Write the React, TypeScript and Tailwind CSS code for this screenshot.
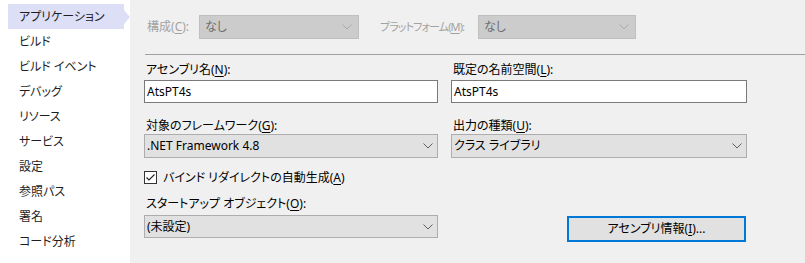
import React from 'react';

const font = "font-['Noto_Sans','Noto_Sans_CJK_JP',sans-serif] [font-feature-settings:'palt']";

const navItems = ['アプリケーション', 'ビルド', 'ビルド イベント', 'デバッグ', 'リソース', 'サービス', '設定', '参照パス', '署名', 'コード分析'];

function Chevron({ color = '#606060' }: { color?: string }) {
  return (
    <svg width="10" height="6" viewBox="0 0 10 6" className="shrink-0">
      <path d="M0.5 0.5 L5 5 L9.5 0.5" fill="none" stroke={color} strokeWidth="1" />
    </svg>
  );
}

function Key({ k }: { k: string }) {
  return (
    <>
      (<span className="underline underline-offset-2">{k}</span>)
    </>
  );
}

function Combo({ value, h = 'h-[24px]' }: { value: string; h?: string }) {
  return (
    <div className={`${h} flex items-center justify-between border border-[#adadad] bg-[#e1e1e1] pl-[2px] pr-[4px] text-[12px] text-black`}>
      <span>{value}</span>
      <Chevron />
    </div>
  );
}

function TextInput({ value }: { value: string }) {
  return (
    <div className="flex h-[23px] items-center border border-[#7a7a7a] bg-white pl-[2px] text-[12px] text-black">
      {value}
    </div>
  );
}

export default function App() {
  return (
    <div className={`flex h-[263px] w-[805px] overflow-hidden bg-[#f0f0f0] text-[12px] leading-[16px] ${font}`}>
      {/* Sidebar */}
      <div className="relative w-[130px] shrink-0 bg-white pt-[4px]">
        {navItems.map((item, i) =>
          i === 0 ? (
            <div key={item} className="relative ml-[8px] flex h-[25px] w-[116px] items-center bg-[#dcdff6] pl-[11px] text-[#1e1e1e]">
              {item}
              <span className="absolute right-[-6px] top-[6px] h-0 w-0 border-y-[7px] border-l-[6px] border-y-transparent border-l-[#dcdff6]" />
            </div>
          ) : (
            <div key={item} className="flex h-[25px] items-center pl-[19px] text-[#1e1e1e]">
              {item}
            </div>
          )
        )}
      </div>

      {/* Main */}
      <div className="flex-1 pl-[14px] pt-[15px]">
        {/* Configuration row */}
        <div className="flex h-[24px] items-center whitespace-nowrap">
          <div className="w-[55px] shrink-0 pl-[3px] text-[#a2a2a2]">
            構成<Key k="C" />:
          </div>
          <div className="flex h-[24px] w-[160px] shrink-0 items-center justify-between border border-[#bfbfbf] bg-[#cccccc] pl-[5px] pr-[6px] text-[#6d6d6d]">
            <span>なし</span>
            <Chevron color="#a8a8a8" />
          </div>
          <div className="ml-[21px] w-[98px] shrink-0 text-[11px] tracking-[-0.9px] text-[#a2a2a2]">
            プラットフォーム<Key k="M" />:
          </div>
          <div className="flex h-[24px] w-[158px] shrink-0 items-center justify-between border border-[#bfbfbf] bg-[#cccccc] pl-[5px] pr-[6px] text-[#6d6d6d]">
            <span>なし</span>
            <Chevron color="#a8a8a8" />
          </div>
        </div>

        <div className="ml-px mt-[15px] h-px bg-[#a0a0a0]" />

        <div className="flex gap-[13px] text-black">
          {/* Column 1 */}
          <div className="flex w-[294px] flex-col">
            <div className="h-[25px] pl-[2px] pt-[7px]">
              アセンブリ名<Key k="N" />:
            </div>
            <TextInput value="AtsPT4s" />
            <div className="h-[31px] pl-[2px] pt-[15px]">
              対象のフレームワーク<Key k="G" />:
            </div>
            <Combo value=".NET Framework 4.8" />
            <div className="mt-[13px] flex h-[13px] items-center gap-[6px]">
              <div className="flex h-[13px] w-[13px] items-center justify-center border border-[#333333] bg-white">
                <svg width="11" height="11" viewBox="0 0 11 11">
                  <path d="M1.5 5.5 L4 8 L9.5 2.5" fill="none" stroke="#222" strokeWidth="1.1" />
                </svg>
              </div>
              <span>
                バインド リダイレクトの自動生成<Key k="A" />
              </span>
            </div>
            <div className="mt-[12px] h-[19px] pl-[2px]">
              スタートアップ オブジェクト<Key k="O" />:
            </div>
            <Combo value="(未設定)" h="h-[23px]" />
          </div>

          {/* Column 2 */}
          <div className="flex w-[296px] flex-col">
            <div className="h-[25px] pl-[2px] pt-[7px]">
              既定の名前空間<Key k="L" />:
            </div>
            <TextInput value="AtsPT4s" />
            <div className="h-[31px] pl-[2px] pt-[15px]">
              出力の種類<Key k="U" />:
            </div>
            <Combo value="クラス ライブラリ" />
            <div className="mt-[58px] flex justify-end pr-px">
              <button className="flex h-[26px] w-[179px] items-center justify-center border-2 border-[#0078d7] bg-[#e1e1e1] text-black">
                アセンブリ情報<Key k="I" />...
              </button>
            </div>
          </div>
        </div>
      </div>
    </div>
  );
}
